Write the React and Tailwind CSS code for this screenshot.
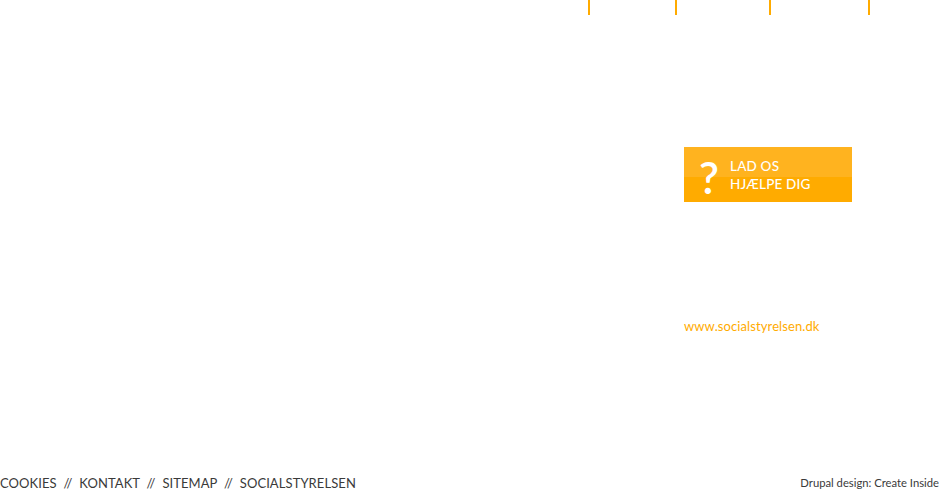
export default function App() {
  const font = { fontFamily: 'Lato, "Open Sans", sans-serif' };
  return (
    <div className="w-[939px] h-[490px] bg-white flex flex-col overflow-hidden" style={font}>
      <div className="flex h-[15px] pl-[588px]">
        <div className="w-[87px] border-l-2 border-[#ffab00]" />
        <div className="w-[94px] border-l-2 border-[#ffab00]" />
        <div className="w-[99px] border-l-2 border-[#ffab00]" />
        <div className="w-[2px] border-l-2 border-[#ffab00]" />
      </div>
      <div className="flex-1 pl-[684px] pt-[132px]">
        <a className="relative block w-[168px] h-[55px] bg-[#ffab00]">
          <div className="absolute inset-x-0 top-0 h-[30px] bg-[#ffb31f]" />
          <div className="relative flex items-center h-full pl-[15px]">
            <span className="text-white text-[44px] leading-none font-semibold mr-[11px] mt-[4px]">?</span>
            <span className="text-white text-[13.5px] leading-[18px] font-medium tracking-[0.2px]">
              LAD OS
              <br />
              HJÆLPE DIG
            </span>
          </div>
        </a>
        <div className="mt-[116px] text-[13px] text-[#ffab00] leading-[16px] tracking-[0.1px]">www.socialstyrelsen.dk</div>
      </div>
      <div className="flex justify-between items-end h-[20px]">
        <div className="text-[13px] text-[#3a3a3a] leading-[14px] tracking-[0.08px] whitespace-pre">COOKIES  //  KONTAKT  //  SITEMAP  //  SOCIALSTYRELSEN</div>
        <div className="text-[11.25px] text-[#3a3a3a] leading-[14px]">Drupal design: Create Inside</div>
      </div>
    </div>
  );
}
